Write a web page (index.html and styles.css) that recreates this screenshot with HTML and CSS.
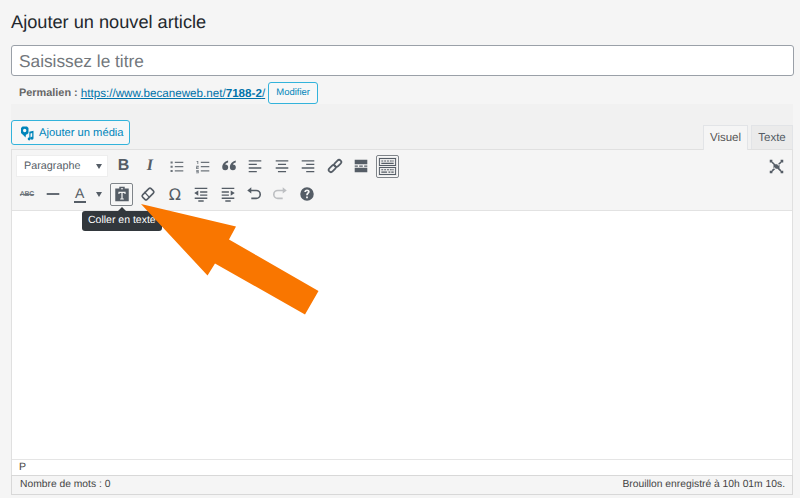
FILE: index.html
```html
<!DOCTYPE html>
<html lang="fr">
<head>
<meta charset="utf-8">
<title>Ajouter un nouvel article</title>
<link rel="stylesheet" href="styles.css">
</head>
<body>
<div class="page">
  <h1 class="heading">Ajouter un nouvel article</h1>
  <div class="title-box">Saisissez le titre</div>
  <div class="permalink">
    <strong class="perm-label">Permalien :</strong>
    <a class="perm-link">https://www.becaneweb.net/<b>7188-2</b>/</a>
    <span class="btn-small">Modifier</span>
  </div>
  <div class="editor">
    <div class="editor-top">
      <span class="btn-media">
        <svg class="media-icon" viewBox="0 0 16 16" width="16" height="16"><path fill="#0085ba" fill-rule="evenodd" d="M3.500 1.500h4.500l1.500 1.500v5l-1.500 1.500H7l-.5 3-2.800-3H3.500L2 8V3zM5.700 3.800a1.700 1.700 0 1 0 0 3.400 1.700 1.700 0 0 0 0-3.400z"/><path fill="#0085ba" d="M10.300 6.800l4.200-1.100v7.500a1.500 1.500 0 1 1-1.300-1.500V8.100l-1.700.5v5.400a1.400 1.400 0 1 1-1.200-1.400z"/></svg>
        Ajouter un média
      </span>
      <div class="tabs">
        <span class="tab tab-active">Visuel</span>
        <span class="tab">Texte</span>
      </div>
    </div>
    <div class="frame">
      <div class="toolbar">
        <div class="row">
          <span class="select">Paragraphe<i class="caret"></i></span>
          <span class="tool"><b class="glyph-b">B</b></span>
          <span class="tool"><i class="glyph-i">I</i></span>
          <span class="tool"><svg class="ico ico-light" viewBox="0 0 20 20"><path d="M3 4h2.500v2.500H3zM8 4.500h10V6H8zM3 9h2.500v2.500H3zM8 9.500h10V11H8zM3 14h2.500v2.500H3zM8 14.500h10V16H8z"/></svg></span>
          <span class="tool"><svg class="ico ico-light" viewBox="0 0 20 20"><path d="M3 3.500h2v3.500H4V4.500H3zM8 4.500h10V6H8zM2.500 9h3v2.200h-2V12h2v1h-3v-2.600h2v-.4h-2zM8 9.500h10V11H8zM2.500 14h3v4h-3v-1h2v-.5h-2v-1h2V15h-2zM8 14.500h10V16H8z"/></svg></span>
          <span class="tool"><svg class="ico" viewBox="0 0 20 20"><path d="M9 4C5 5.200 2.500 8 2.500 11.500a3.300 3.300 0 1 0 3.300-3.300C6.300 7.200 7.500 6.400 9 6zM17.500 4c-4 1.200-6.500 4-6.500 7.500a3.300 3.300 0 1 0 3.300-3.300c.5-1 1.700-1.800 3.200-2.200z"/></svg></span>
          <span class="tool"><svg class="ico" viewBox="0 0 20 20"><path d="M3 3.500h14V5H3zM3 7.500h9V9H3zM3 11.500h14V13H3zM3 15.500h9V17H3z"/></svg></span>
          <span class="tool"><svg class="ico" viewBox="0 0 20 20"><path d="M3 3.500h14V5H3zM5.500 7.500h9V9h-9zM3 11.500h14V13H3zM5.500 15.500h9V17h-9z"/></svg></span>
          <span class="tool"><svg class="ico" viewBox="0 0 20 20"><path d="M3 3.500h14V5H3zM8 7.500h9V9H8zM3 11.500h14V13H3zM8 15.500h9V17H8z"/></svg></span>
          <span class="tool"><svg class="ico ico-mid" viewBox="0 0 20 20"><g fill="none" stroke="#555d66" stroke-width="2.200"><rect x="1.500" y="10.500" width="10" height="5.600" rx="2.800" transform="rotate(-45 6.500 13.300)"/><rect x="8.500" y="3.900" width="10" height="5.600" rx="2.800" transform="rotate(-45 13.500 6.700)"/></g></svg></span>
          <span class="tool"><svg class="ico" viewBox="0 0 20 20"><path d="M3 3h14v5H3zM3 9.500h3.500v1.200H3zM8 9.500h4v1.200H8zM13.500 9.500H17v1.200h-3.500zM3 12h14v5H3z"/></svg></span>
          <span class="tool tool-on"><svg class="ico ico-large" viewBox="0 0 20 20"><path fill-rule="evenodd" d="M1 1h18v8.500H1zM2 2v6.500h16V2zM3.500 3.800h2v1h-2zM6.500 3.800h2v1h-2zM9.500 3.800h2v1h-2zM12.500 3.800h2v1h-2zM15 3.800h1.500v1H15zM3.500 6h13v1.300h-13zM1 10.500h18V19H1zM2 11.500V18h16v-6.500zM3.500 13h2v1h-2zM6.500 13h2v1h-2zM9.500 13h2v1h-2zM12.500 13h2v1h-2zM15 13h1.500v1H15zM3.500 15.200h6v1.500h-6zM11 15.200h2v1.500h-2zM14 15.200h2.500v1.500H14z"/></svg></span>
          <span class="spacer"></span>
          <span class="tool tool-end"><svg class="ico ico-small" viewBox="0 0 20 20"><path d="M6 7h8v6H6zM3.500 5L5 3.500 9 7.500l-1.500 1.500zM16.500 5L15 3.500 11 7.500l1.500 1.500zM3.500 15L5 16.500 9 12.500 7.500 11zM16.500 15L15 16.500 11 12.500l1.500-1.500zM1 1h3.500v3.500H1zM15.500 1H19v3.500h-3.500zM1 15.500h3.500V19H1zM15.500 15.500H19V19h-3.500z"/></svg></span>
        </div>
        <div class="row row-second">
          <span class="tool"><span class="glyph-abc">ABC</span></span>
          <span class="tool"><svg class="ico" viewBox="0 0 20 20"><path d="M3 9h14v2H3z"/></svg></span>
          <span class="tool"><span class="glyph-a">A</span></span>
          <span class="split-caret"><i class="caret"></i></span>
          <span class="tool tool-on tool-paste"><svg class="ico" viewBox="0 0 20 20"><path fill-rule="evenodd" d="M7 2h6v1.800h4.500V18h-15V3.800H7zM8.800 3.500v1.300h2.400V3.500zM6 7.500v2.500h1.300V8.800h2V15H8v1.200h4V15h-1.300V8.800h2V10H14V7.500z"/></svg></span>
          <span class="tool"><svg class="ico ico-mid" viewBox="0 0 20 20"><rect x="2.500" y="6" width="15" height="8" rx="2" fill="#fafafa" stroke="#555d66" stroke-width="2" transform="rotate(-45 10 10)"/><path fill="none" stroke="#555d66" stroke-width="1.500" d="M5.500 7.500l6.500 7"/></svg></span>
          <span class="tool"><span class="glyph-omega">Ω</span></span>
          <span class="tool"><svg class="ico" viewBox="0 0 20 20"><path d="M3 3h14v1.500H3zM9 7h8v1.500H9zM7 6v6L2.500 9zM9 10.500h8V12H9zM3 14h14v1.500H3zM7 17h6v1.500H7z"/></svg></span>
          <span class="tool"><svg class="ico" viewBox="0 0 20 20"><path d="M3 3h14v1.500H3zM3 7h8v1.500H3zM13 6v6l4.500-3zM3 10.500h8V12H3zM3 14h14v1.500H3zM7 17h6v1.500H7z"/></svg></span>
          <span class="tool"><svg class="ico" viewBox="0 0 20 20"><path d="M7 2.500v2.700h5.500a5.300 5.300 0 0 1 0 10.600H7V14h5.500a3.500 3.500 0 0 0 0-7H7v2.500L2.500 6z"/></svg></span>
          <span class="tool tool-off"><svg class="ico" viewBox="0 0 20 20"><path d="M13 2.500v2.700H7.500a5.300 5.300 0 0 0 0 10.600H13V14H7.500a3.500 3.500 0 0 1 0-7H13v2.500L17.500 6z"/></svg></span>
          <span class="tool"><svg class="ico" viewBox="0 0 20 20"><path fill-rule="evenodd" d="M10 2.500a7.500 7.500 0 1 1 0 15 7.500 7.500 0 0 1 0-15zM9 12.800v2h2v-2zM10 5c-1.700 0-3 1-3 2.700h2c0-.6.400-1 1-1s1 .4 1 .9c0 1-2 1.300-2 3.700h2c0-1.700 2-2 2-3.900C13 6 11.700 5 10 5z"/></svg></span>
        </div>
      </div>
      <div class="content"></div>
      <div class="path">P</div>
    </div>
    <div class="status">
      <span>Nombre de mots : 0</span>
      <span>Brouillon enregistré à 10h 01m 10s.</span>
    </div>
  </div>
</div>
<div class="tooltip">Coller en texte</div>
<svg class="arrow" viewBox="0 0 800 498" width="800" height="498"><polygon fill="#f97600" points="141,204 236,226.500 229,239.500 318.500,291 305,314.500 215,263.500 207.500,275.500"/></svg>
</body>
</html>
```
FILE: styles.css
```css
* { box-sizing: border-box; }
html, body { margin: 0; padding: 0; }
body {
  position: relative;
  width: 800px;
  height: 498px;
  overflow: hidden;
  background: #f5f5f5;
  font-family: "Liberation Sans", Arial, sans-serif;
  color: #23282d;
  text-rendering: geometricPrecision;
}
.page { padding: 0 6px 0 11px; }
.heading {
  margin: 0;
  padding-top: 10px;
  height: 45px;
  font-size: 18.200px;
  line-height: 24px;
  font-weight: 400;
}
.title-box {
  height: 31px;
  background: #fff;
  border: 1px solid #9aa0a8;
  border-radius: 3px;
  padding: 0 7px;
  font-size: 17.300px;
  line-height: 31px;
  color: #72777c;
}
.permalink {
  display: flex;
  align-items: center;
  height: 28px;
  padding: 6px 0 0 8px;
  font-size: 11.650px;
  color: #666;
}
.perm-label { margin-right: 3px; font-size: 10.900px; }
.perm-link { color: #0073aa; text-decoration: underline; }
.btn-small {
  margin-left: 3px;
  width: 50px;
  height: 22px;
  line-height: 20px;
  text-align: center;
  font-size: 9.500px;
  color: #0085ba;
  border: 1px solid #33b3db;
  border-radius: 3px;
  background: #f7f7f7;
}
.editor { background: #f1f1f1; margin-right: 1px; }
.editor-top {
  display: flex;
  justify-content: space-between;
  align-items: flex-end;
  height: 45px;
}
.btn-media {
  display: flex;
  align-items: center;
  gap: 4px;
  width: 119px;
  height: 25px;
  margin-bottom: 4px;
  padding-left: 7px;
  font-size: 11.200px;
  color: #0085ba;
  background: #f7f7f7;
  border: 1px solid #33b3db;
  border-radius: 3px;
}
.tabs { display: flex; gap: 3px; }
.tab {
  width: 42px;
  height: 24px;
  line-height: 24px;
  text-align: center;
  font-size: 11.500px;
  color: #555d66;
  background: #ebebeb;
  border: 1px solid #e2e4e7;
  border-bottom: 0;
}
.tab-active {
  width: 45px;
  height: 25px;
  margin-bottom: -1px;
  background: #f5f5f5;
  color: #555;
  position: relative;
}
.frame { border: 1px solid #e0e0e0; border-bottom: 0; background: #fff; }
.toolbar {
  height: 61px;
  padding: 2px 0 0 2px;
  background: #f5f5f5;
  border-bottom: 1px solid #e2e2e2;
}
.row { display: flex; align-items: center; height: 28px; }
.row-second { padding-left: 1.500px; }
.select {
  position: relative;
  width: 92px;
  height: 22px;
  margin: 0 4px 0 2px;
  padding-left: 7px;
  line-height: 21px;
  font-size: 10.800px;
  color: #555d66;
  background: #fff;
  border: 1px solid #eee;
}
.select .caret { position: absolute; right: 5px; top: 8px; }
.caret {
  display: block;
  width: 0;
  height: 0;
  border-left: 3.500px solid transparent;
  border-right: 3.500px solid transparent;
  border-top: 5px solid #555d66;
}
.tool {
  display: flex;
  align-items: center;
  justify-content: center;
  width: 23px;
  height: 23px;
  margin-right: 3.400px;
  flex: none;
  border: 1px solid transparent;
  border-radius: 2px;
}
.tool-on {
  border: 1px solid #80858a;
  background: #ebebeb;
  box-shadow: inset 0 0 0 1px #f8f8f8;
}
.tool-paste { background: #f5f5f5; }
.tool-off .ico { fill: #bdbfc2; }
.tool-end { margin-right: 4.500px; }
.spacer { flex: 1; }
.split-caret { width: 15.800px; padding-left: 1px; flex: none; }
.ico { width: 18px; height: 18px; fill: #555d66; display: block; flex: none; }
.ico-light { fill: #6d747b; width: 17px; height: 17px; }
.ico-mid { width: 16px; height: 16px; }
.ico-large { width: 19px; height: 19px; }
.ico-small { width: 15px; height: 15px; }
.glyph-b { font-size: 16px; font-weight: 700; color: #555d66; }
.glyph-i { font: italic 700 16px "Liberation Serif", serif; color: #555d66; }
.glyph-abc { font-size: 7px; font-weight: 700; letter-spacing: -.3px; color: #6d747b; text-decoration: line-through; }
.glyph-a {
  display: block;
  font-size: 14px;
  line-height: 15px;
  color: #555d66;
  border-bottom: 2px solid #555d66;
  padding: 0 1.500px;
}
.glyph-omega { font: 16px "DejaVu Sans", sans-serif; color: #555d66; }
.content { height: 248px; background: #fff; }
.path {
  height: 16px;
  padding-left: 7px;
  font-size: 10.500px;
  line-height: 15px;
  color: #444;
  background: #fff;
  border-top: 1px solid #e5e5e5;
}
.status {
  display: flex;
  justify-content: space-between;
  height: 20px;
  padding: 0 7px 0 8px;
  font-size: 10.300px;
  line-height: 18px;
  color: #444;
  background: #f5f5f5;
  border: 1px solid #d8d8d8;
}
.tooltip {
  position: absolute;
  left: 82px;
  top: 211px;
  width: 80px;
  height: 20px;
  padding-left: 6px;
  font-size: 10.500px;
  line-height: 19px;
  color: #fff;
  white-space: nowrap;
  background: #32373c;
  border-radius: 3px;
}
.tooltip::before {
  content: "";
  position: absolute;
  left: 36px;
  top: -4px;
  border-left: 4px solid transparent;
  border-right: 4px solid transparent;
  border-bottom: 4px solid #32373c;
}
.arrow { position: absolute; left: 0; top: 0; }
```
